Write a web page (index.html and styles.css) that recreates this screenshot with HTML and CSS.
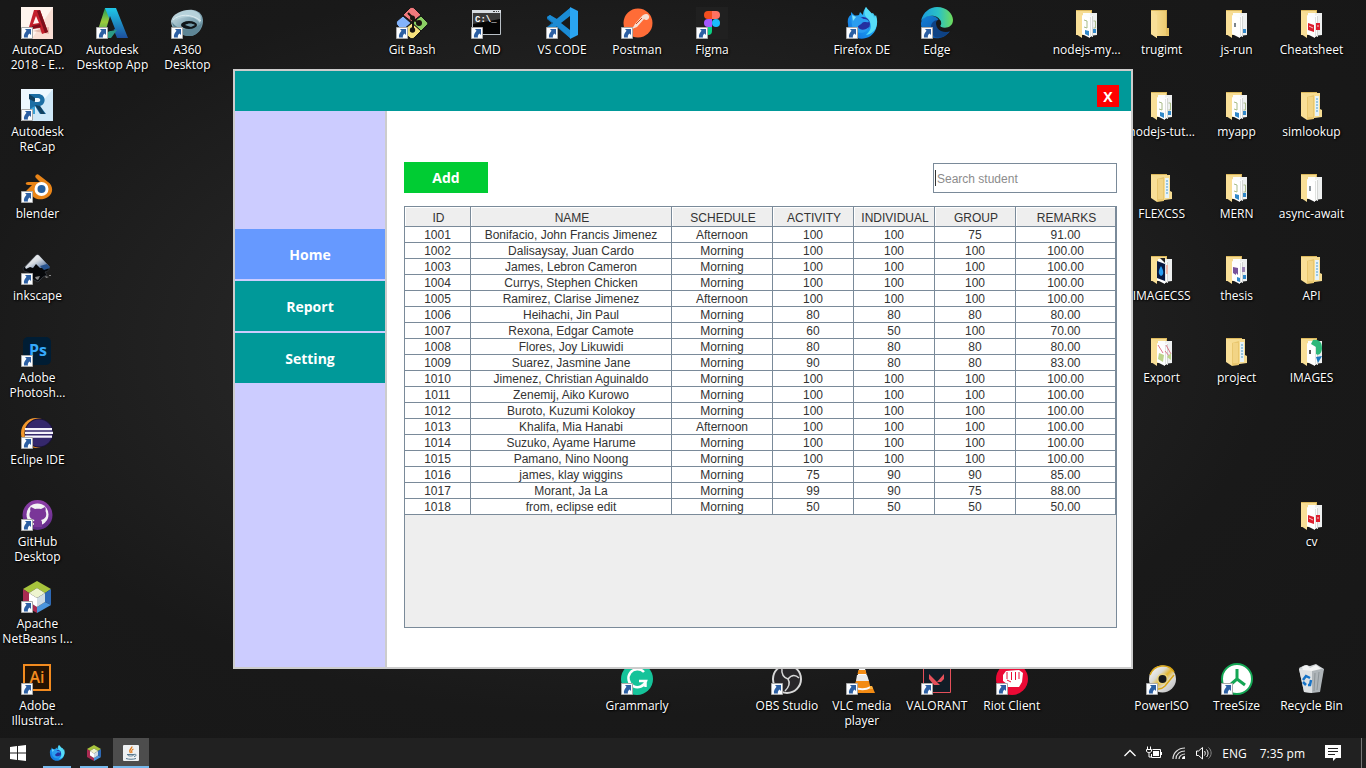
FILE: index.html
```html
<!DOCTYPE html>
<html lang="en">
<head>
<meta charset="utf-8">
<meta name="viewport" content="width=device-width, initial-scale=1">
<title>Desktop</title>
<link rel="stylesheet" href="styles.css">
</head>
<body>
<svg class="sprite" aria-hidden="true">
  <defs>
    <linearGradient id="gBlueSky" x1="0" y1="0" x2="0" y2="1"><stop offset="0" stop-color="#1fc8e8"/><stop offset="1" stop-color="#1d4f9f"/></linearGradient>
    <linearGradient id="gGreen" x1="0" y1="0" x2="0" y2="1"><stop offset="0" stop-color="#1f9a5a"/><stop offset=".5" stop-color="#9ccc3c"/><stop offset="1" stop-color="#2f9a66"/></linearGradient>
    <linearGradient id="gSteel" x1="0" y1="0" x2="1" y2="1"><stop offset="0" stop-color="#d9eaf0"/><stop offset=".5" stop-color="#86aab8"/><stop offset="1" stop-color="#5f8796"/></linearGradient>
    <linearGradient id="gInk" x1="0" y1="0" x2="1" y2="1"><stop offset="0" stop-color="#fff"/><stop offset=".45" stop-color="#d7dce2"/><stop offset="1" stop-color="#274f8c"/></linearGradient>
    <linearGradient id="gFolder" x1="0" y1="0" x2="1" y2="0"><stop offset="0" stop-color="#fbe3a0"/><stop offset="1" stop-color="#eac768"/></linearGradient>
    <linearGradient id="gFire" x1="0" y1="1" x2="1" y2="0"><stop offset="0" stop-color="#1268d8"/><stop offset=".5" stop-color="#1a9af0"/><stop offset="1" stop-color="#58e6fa"/></linearGradient>
    <linearGradient id="gEdge" x1="0" y1="0" x2="1" y2="0"><stop offset="0" stop-color="#1a9be0"/><stop offset=".55" stop-color="#2bc2c4"/><stop offset="1" stop-color="#6fdc5a"/></linearGradient>
    <linearGradient id="gEdgeLow" x1="0" y1="0" x2="1" y2="1"><stop offset="0" stop-color="#1380d8"/><stop offset="1" stop-color="#0d4a9a"/></linearGradient>
    <linearGradient id="gPurple" x1="0" y1="0" x2="0" y2="1"><stop offset="0" stop-color="#8f3fa9"/><stop offset="1" stop-color="#5d2a86"/></linearGradient>
    <linearGradient id="gDisc" x1="0" y1="0" x2="1" y2="1"><stop offset="0" stop-color="#fff"/><stop offset=".35" stop-color="#d9d9d4"/><stop offset=".5" stop-color="#e3b52c"/><stop offset=".65" stop-color="#ddd"/><stop offset="1" stop-color="#b5b5b5"/></linearGradient>
  </defs>

  <symbol id="arrow" viewBox="0 0 12 12">
    <path fill="#fbfdff" stroke="#a9a9a9" stroke-width="1" d="M.5.5h11v11H.5z"/>
    <path fill="#2c5fa3" d="M4 2h6v6L8.500 6.500C7 8 6.500 9 7 10.500H3C2.400 7.600 4 5.500 5.500 3.700z"/>
  </symbol>

  <symbol id="autocad" viewBox="0 0 32 32">
    <path fill="#f9ded4" d="M0 0h32v32H0z"/><path fill="#fff4ee" d="M0 0h32L12 30H0z"/>
    <path fill="#e3b8ac" d="M12 24l16-4v7z"/>
    <path fill="#c3202c" d="M13 3h6l8 22-6 2-2-6-8 1-2 5H6zM15 9l-3 8 6-1z" fill-rule="evenodd"/>
    <path fill="#7d0f1a" d="M19 3l8 22-3 1L16 4zM11 19l8-2 1 3-9 2z"/>
  </symbol>
  <symbol id="autodesk" viewBox="0 0 32 32">
    <path fill="url(#gGreen)" d="M9 1h6l2 7-8 21H0z"/><path fill="url(#gBlueSky)" d="M9 1h11l12 30H21z"/>
    <path fill="#2b9a86" d="M7 25l14-2-6 8H4z"/><path fill="#1a1a1a" d="M14 9l5 13-10 4z"/>
  </symbol>
  <symbol id="a360" viewBox="0 0 32 32">
    <path fill="url(#gSteel)" d="M0 14C2 6 13 2 22 3c7 1 10 6 10 11 0 8-6 15-13 15C8 29 0 22 0 14z"/>
    <path fill="#5f8696" d="M1 15c5 8 19 11 30 1-2 8-6 13-12 13C9 29 2 23 1 15z"/>
    <path fill="#b6d2db" d="M5 9c5-5 14-8 21-4 5 3 4 8 3 11-4-7-15-8-24-3z"/>
    <ellipse cx="18" cy="18" rx="8" ry="4" fill="#10161a"/><path fill="#7197a6" d="M14 18c3-2 7-2 10 0l-4 2c-2-1-4-1-6-2z"/>
    <path fill="none" stroke="#dcebf0" d="M2 13c6-6 18-7 28 1"/>
  </symbol>
  <symbol id="recap" viewBox="0 0 32 32">
    <path fill="#cfe8f8" d="M0 0h32v32H0z"/><path fill="#eef8ff" d="M0 0h32L8 28H0z"/>
    <path fill="#1c6ea4" fill-rule="evenodd" d="M8 5h9c8 0 9 10 2 12l6 8h-6l-5-8v8H9V12zM13 9v4h4c3 0 3-4 0-4z"/>
    <path fill="#12405f" d="M8 5l6 4v4L8 10zM14 16l5 1 5 8h-4z"/><path fill="#39a0d6" d="M9 20l5-3v8H9z"/>
  </symbol>
  <symbol id="blender" viewBox="0 0 32 32">
    <path fill="#e88418" d="M15 4c1-1 2-1 3 0l9 7c6 4 5 12 0 15-6 4-15 3-17-4l-8 6c-3 2-4-1-2-3L11 14H7c-3 0-3-3 0-3h12l-4-4c-1-1-1-2 0-3z"/>
    <circle cx="20.500" cy="18" r="7" fill="#fff"/><circle cx="20.500" cy="18" r="4" fill="#265f9e"/>
  </symbol>
  <symbol id="inkscape" viewBox="0 0 32 32">
    <path fill="#06080b" stroke="#30343a" d="M15 2L3 14c-2 2 0 5 3 5l6 3-3 3 8 4 5-5 4-2-2-3c4-1 5-3 3-5L18 2c-1-1-2-1-3 0z"/>
    <path fill="url(#gInk)" d="M15 2.500c1-1 2-1 3 0L29 14c-4 2-7 0-10 1l-4-4-3 4-3-1-4 2-1-2z"/>
    <path fill="#26528e" d="M19 13l7-2 3 4-6 2z"/><path fill="#8a8a8a" d="M14 24l5-1-2 4-2-1zM24 23l4 1-3 1zM28 22h2v1h-2z"/>
  </symbol>
  <symbol id="eclipse" viewBox="0 0 32 32">
    <circle cx="15" cy="16" r="15" fill="#f3982d"/><circle cx="18" cy="16" r="14.500" fill="#1a1436"/><circle cx="18" cy="16" r="13.500" fill="#35286c"/>
    <path fill="#f5f3fb" d="M4 11h27v2.200H4zM4 14.800h28V17H4zM4 18.500h27v2.200H4z"/>
  </symbol>
  <symbol id="github" viewBox="0 0 32 32">
    <circle cx="16.500" cy="16" r="15" fill="url(#gPurple)"/>
    <circle cx="16.500" cy="15.500" r="11" fill="#f2f2f4"/>
    <path fill="#7a3698" d="M10 8l4 2c2-.5 4-.5 6 0l4-2c1 1 .7 3 .5 4 2 5 0 8-4.500 9 1 1 1 2 1 3v4h-8v-4c-3 1-4-1-5-3 2 0 2 2 5 1l.5-1C9 20 7 17 9.500 12 9 11 9 9 10 8z"/>
  </symbol>
  <symbol id="netbeans" viewBox="0 0 32 32">
    <path fill="#a7c43c" d="M16 0l14 8-6 4-8-5-8 5-6-4z"/><path fill="#a92b52" d="M2 8l6 4v9l8 5v6L2 24z"/>
    <path fill="#2d69b5" d="M30 8v16l-6-3v-9z"/><path fill="#4b95dd" d="M24 21l6 3-14 8v-6z"/>
    <path fill="#eef4cf" d="M16 7l8 5-8 5-8-5z"/><path fill="#fff" d="M8 12l8 5v9l-8-5z"/><path fill="#cfdce4" d="M24 12v9l-8 5v-9z"/>
  </symbol>
  <symbol id="gitbash" viewBox="0 0 32 32">
    <g stroke="#151515" stroke-width="1">
      <path fill="#f0797c" d="M14 1c1-1 3-1 4 0l7 7-9 7-9-7z"/><path fill="#83b3fb" d="M7 9l8 7-9 8-5-6c-1-1-1-3 0-4z"/>
      <path fill="#8bcf63" d="M25 9l6 6c1 1 1 2 0 3l-6 6-9-8z"/><path fill="#f8e27c" d="M16 16l9 8-7 7c-1 1-3 1-4 0l-8-7z"/></g>
    <g fill="none" stroke="#1a1410" stroke-width="2"><path d="M12 6l5 5v12M17 12l6 4"/></g>
    <g fill="#1a1410"><circle cx="16.500" cy="11" r="2.500"/><circle cx="23" cy="16" r="3"/><circle cx="16.500" cy="23" r="2.700"/></g>
  </symbol>
  <symbol id="vscode" viewBox="0 0 32 32">
    <path fill="#0f72b8" d="M1 10l3-2 20 15v8L1 12zM24 1L1 20v2l3 2 20-15z"/>
    <path fill="#1b8bd4" d="M24 1L11 12l-7-4-3 2 6 6-6 6 3 2 7-5 13 12z"/>
    <path fill="#2aa5f2" d="M24 0l8 4v24l-8 4z"/><path fill="#191919" d="M24 9v14l-9-7z"/>
  </symbol>
  <symbol id="postman" viewBox="0 0 32 32">
    <circle cx="17" cy="16" r="14.500" fill="#ff6c37"/>
    <path fill="#f6ded3" d="M25 7a3 3 0 1 1-2 5l-7 8-5 2 3-5 7-8c1-1 2-2 4-2z"/><path stroke="#c74820" d="M15 17l6-6M9 25l3-3"/>
  </symbol>
  <symbol id="figma" viewBox="0 0 32 32">
    <rect width="32" height="32" fill="#202020"/>
    <path fill="#f24e1e" d="M16 4h-4a4 4 0 0 0 0 8h4z"/><path fill="#ff7262" d="M16 4h4a4 4 0 0 1 0 8h-4z"/>
    <path fill="#a259ff" d="M16 12h-4a4 4 0 0 0 0 8h4z"/><circle cx="20" cy="16" r="4" fill="#1abcfe"/><path fill="#0acf83" d="M12 20h4v4a4 4 0 1 1-4-4z"/>
  </symbol>
  <symbol id="firefox" viewBox="0 0 32 32">
    <path fill="url(#gFire)" d="M2 17c-1-5 1-8 3-9V5l4 4 4-1 1-3 3 3c0-3 1-5 3-8 1 3 2 4 4 7l3-1c7 9 4 22-7 25C11 34 2 27 2 17z"/>
    <path fill="#56dcf8" d="M20 0c3 4 7 6 8 11l2-3c4 12-3 19-10 20 8-7 5-13 1-17-3-3-3-6-1-11z"/>
    <circle cx="17" cy="17" r="7" fill="#2430a0"/><path fill="#2a9df0" d="M6 9c4-1 7 0 10 2 2 2 6 0 7 4-3 1-5-1-7 1-1 2-4 2-4 4 2 4 8 3 11 0-2 8-16 8-17-2-1-4 0-6 0-9z"/>
    <path fill="#7ee2f9" d="M6 8l4 2-3 4z"/>
  </symbol>
  <symbol id="edge" viewBox="0 0 32 32">
    <path fill="url(#gEdgeLow)" d="M0 16C1 10 7 8 12 9c5 1 7 5 6 9-3 4 1 9 11 6-5 8-17 10-24 3C1 24 0 20 0 16z"/>
    <path fill="#0e4284" d="M10 20c0-4 3-7 7-7-4 6 1 14 12 10-3 6-9 9-15 7-4-3-4-6-4-10z"/>
    <path fill="url(#gEdge)" d="M0 14C2 5 9 0 16 0c10 0 16 7 16 13 0 7-7 9-12 7-2-1 1-2 0-5C17 7 6 7 0 14z"/>
    <path fill="#181818" d="M15 16c0-3 4-5 5-1 0 2-3 3 0 5 4 3 9 2 12 1l-2 3c-8 3-15-1-15-8z"/>
  </symbol>

  <symbol id="folder" viewBox="0 0 32 32">
    <path fill="#d9b65d" d="M5 3h16v22H5z"/><path fill="url(#gFolder)" d="M5 4h15v17l3 1v7H11V31l-6-4z"/><path fill="#f9df97" d="M5 4l6 4v23l-6-4z"/><path fill="#e4bf62" d="M20 21h3v7h-3z"/>
  </symbol>
  <symbol id="folder-base" viewBox="0 0 32 32">
    <path fill="#dcb85c" d="M5 3h16v4H5z"/><path fill="#f6dc92" d="M5 4h15v24H5z"/>
    <path fill="#eef0f0" d="M18 6h8v22l-8 1z"/><path fill="#fcfdfd" d="M12 6h7v3l3-1v22l-10-4z"/><path fill="#d4d6d4" d="M21 9h1v20h-1z"/>
    <path fill="#f9df97" d="M5 4l6 4v23l-6-4z"/><path fill="#fff" d="M11 8l8 4v19l-8-4z"/><path fill="#e0e2e0" d="M19 10h1v20h-1z"/>
  </symbol>
  <symbol id="folder-code" viewBox="0 0 32 32">
    <use href="#folder-base"/><path fill="none" stroke="#a9bb88" d="M13 13l3 1v7l-3-1M22.500 14h2v7h-2"/><path fill="#3188c9" d="M14 23l4 1v5l-4-2zM22 22h3v4h-3z"/>
  </symbol>
  <symbol id="folder-file" viewBox="0 0 32 32">
    <use href="#folder-base"/><path stroke="#7d858c" stroke-width="2" d="M14 16v4"/><path fill="#3188c9" d="M22 22h3v4h-3z"/>
  </symbol>
  <symbol id="folder-plain" viewBox="0 0 32 32">
    <use href="#folder-base"/><path stroke="#8d959c" stroke-width="2" d="M14 15v5"/>
  </symbol>
  <symbol id="folder-pdf" viewBox="0 0 32 32">
    <use href="#folder-base"/><path fill="#dc1e2d" d="M12 16l6 2v7l-6-2zM20 16h4v7h-4z"/><path stroke="#f7c4c8" d="M13 19l4 2M21 19h2"/>
  </symbol>
  <symbol id="folder-nested" viewBox="0 0 32 32">
    <path fill="#dcb85c" d="M5 3h16v4H5z"/><path fill="#f6dc92" d="M5 4h19v16l2 1v7l-15 2z"/><path fill="#e6f2f8" d="M19 7h4v20h-4z"/>
    <path stroke="#4b9cca" stroke-dasharray="2 1" d="M21 9v15"/><path fill="#e9c76f" d="M11 8l7-2v24l-7 1z"/><path fill="#f9df97" d="M5 4l6 4v23l-6-4z"/><path fill="#f2d485" d="M12 8h5v20h-5z"/>
  </symbol>
  <symbol id="folder-image" viewBox="0 0 32 32">
    <use href="#folder-base"/><path fill="#081840" d="M11 8l8 3v17l-8-3z"/><path fill="#279cf1" d="M15 13c3 5 3 9 0 10-3-2-3-5 0-10z"/><path fill="#222" d="M14 5h5v5z"/><path fill="#f0b7aa" d="M20 12h2v9h-2z"/>
  </symbol>
  <symbol id="folder-php" viewBox="0 0 32 32">
    <use href="#folder-base"/><path fill="#78539b" d="M12 14l5 1v7l-2-2v2l-3-2z"/><path fill="#9b82b5" d="M21 14h3v5h-3z"/><path fill="#3188c9" d="M16 24l3 1v4l-3-1zM22 22h3v4h-3z"/>
  </symbol>
  <symbol id="folder-export" viewBox="0 0 32 32">
    <use href="#folder-base"/><path stroke="#de788b" d="M12 10l5 8M20 10l5 9M19 16l5 6"/><path fill="#bdd48b" d="M13 18l5 2-1 7-5-3zM21 22l4-4v7z"/>
  </symbol>
  <symbol id="folder-edge" viewBox="0 0 32 32">
    <use href="#folder-base"/><path fill="#2eb879" d="M17 5c7-1 9 3 9 8s-3 8-6 6V12l-5-3z"/><path fill="#1a77bd" d="M20 22l6-1-4 7z"/><path stroke="#555" stroke-width="2" d="M14 15v4"/>
  </symbol>

  <symbol id="grammarly" viewBox="0 0 32 32">
    <circle cx="16" cy="16" r="16" fill="#15c39a"/><path fill="none" stroke="#fff" stroke-width="2.500" d="M23 9a9 9 0 1 0 2 9h-7M24.500 18v6"/>
  </symbol>
  <symbol id="obs" viewBox="0 0 32 32">
    <circle cx="16" cy="16" r="14" fill="#29272a" stroke="#d8d8d8" stroke-width="2"/>
    <g fill="none" stroke="#d8d8d8" stroke-width="1.500"><path d="M11 6c-1 5 2 9 6 10 4-5 8-4 11-1M17 16c3 5 0 9-3 12"/></g>
  </symbol>
  <symbol id="vlc" viewBox="0 0 32 32">
    <path fill="#f38b13" d="M7 23h19l3 7H4z"/><path fill="#ffb33f" d="M7 23h19l1 3H6z"/><path fill="#fafafa" d="M14 2h4l6 23c-3 3-12 3-15 0z"/>
    <path fill="#f38b13" d="M12.500 7h7l1 4h-9z"/><path fill="#f38b13" d="M10 18h13l1 5c-4 3-11 3-16 0z"/><path fill="#e9e9e9" d="M11 12h10l2 6H10z"/>
  </symbol>
  <symbol id="valorant" viewBox="0 0 32 32">
    <path fill="#111c26" stroke="#e4505a" d="M2.500 2.500h27v27h-27z"/><path fill="#e4505a" d="M8 11l11 11h-6l-5-6zM23 11v5l-3 3h-4z"/>
  </symbol>
  <symbol id="riot" viewBox="0 0 32 32">
    <circle cx="16" cy="16" r="16" fill="#eb0a35"/>
    <path fill="#fff" d="M7 12l3-4 13-1 4 3-1 9-3 5H12l-1-3-4-3z"/><path fill="none" stroke="#eb0a35" d="M11 9v7M15.500 9v8M19.500 9v8M23 9v7M11 17l4 2"/>
  </symbol>
  <symbol id="poweriso" viewBox="0 0 32 32">
    <circle cx="16.500" cy="16" r="13.500" fill="url(#gDisc)"/><path fill="none" stroke="#d9a514" stroke-width="1.500" d="M4 12C8 1 23 0 28 9M5 23c5 5 11 3 14 0l9-11"/>
    <circle cx="16.500" cy="16" r="5.500" fill="#ead37a"/><circle cx="16.500" cy="16" r="4" fill="#16181b"/>
  </symbol>
  <symbol id="treesize" viewBox="0 0 32 32">
    <circle cx="16" cy="16" r="15" fill="#fff" stroke="#14a654" stroke-width="2"/><path fill="none" stroke="#14a654" stroke-width="3" d="M16 6v10l-8 7M16 16l8 6"/>
  </symbol>
  <symbol id="bin" viewBox="0 0 32 32">
    <path fill="#cfd4d7" d="M3 5l6-3 5 1 6-2 3 2 5 3-2 4H5z"/><path fill="#aeb4b8" d="M3 6h25l-4 23-8 1-8-1z"/><path fill="#dee1e3" d="M3 6h13v24l-8-1z"/><path fill="#f3f4f4" d="M6 4l5-2 3 3 6-3 5 4-9 2-9-1z"/><path stroke="#8d9498" d="M19 10l-1 18M23 9l-2 18"/>
    <path fill="none" stroke="#1673c7" stroke-width="2.500" d="M7 17l3-4 4 2M15 17l-1 5h-2M10 22l-3-3"/>
  </symbol>
  <symbol id="java" viewBox="0 0 16 16">
    <rect width="16" height="16" rx="1" fill="#eef1f3"/><path fill="none" stroke="#e07a1c" stroke-width="1.300" d="M9 1.500C9 4 5 4.500 7.500 8M10.500 4C8 5 8.500 6 9 8"/>
    <path fill="none" stroke="#55788f" d="M4 9.500h7c-.5 2-6.500 2-6.500 0M11 9.500c3-1 2.500 2 0 2M3 13.500c3 1 7 1 10 0"/>
  </symbol>
</svg>

<main class="desktop">
  <nav class="shortcuts" aria-label="Desktop shortcuts">
    <a class="item c1 r1" href="#"><span class="icon"><svg class="art"><use href="#autocad"/></svg><svg class="badge"><use href="#arrow"/></svg></span><span class="label">AutoCAD<br>2018 - E...</span></a>
    <a class="item c2 r1" href="#"><span class="icon"><svg class="art"><use href="#autodesk"/></svg><svg class="badge"><use href="#arrow"/></svg></span><span class="label">Autodesk<br>Desktop App</span></a>
    <a class="item c3 r1" href="#"><span class="icon"><svg class="art"><use href="#a360"/></svg><svg class="badge"><use href="#arrow"/></svg></span><span class="label">A360<br>Desktop</span></a>
    <a class="item c6 r1" href="#"><span class="icon"><svg class="art"><use href="#gitbash"/></svg><svg class="badge"><use href="#arrow"/></svg></span><span class="label">Git Bash</span></a>
    <a class="item c7 r1" href="#"><span class="icon"><svg class="art" viewBox="0 0 32 32"><path fill="#050505" stroke="#b9c0c6" d="M1.500 3.500h28v24h-28z"/><path fill="#d8dde2" d="M1 3h29v3H1z"/><path fill="#3a3a3a" d="M2 6h27v6L2 17z"/><path stroke="#444" d="M22 4.500h2M25 4.500h1M27 4.500h1"/><text class="mono-text" x="4" y="15" font-size="9" fill="#fff">C:\_</text></svg><svg class="badge"><use href="#arrow"/></svg></span><span class="label">CMD</span></a>
    <a class="item c8 r1" href="#"><span class="icon"><svg class="art"><use href="#vscode"/></svg><svg class="badge"><use href="#arrow"/></svg></span><span class="label">VS CODE</span></a>
    <a class="item c9 r1" href="#"><span class="icon"><svg class="art"><use href="#postman"/></svg><svg class="badge"><use href="#arrow"/></svg></span><span class="label">Postman</span></a>
    <a class="item c10 r1" href="#"><span class="icon"><svg class="art"><use href="#figma"/></svg><svg class="badge"><use href="#arrow"/></svg></span><span class="label">Figma</span></a>
    <a class="item c12 r1" href="#"><span class="icon"><svg class="art"><use href="#firefox"/></svg><svg class="badge"><use href="#arrow"/></svg></span><span class="label">Firefox DE</span></a>
    <a class="item c13 r1" href="#"><span class="icon"><svg class="art"><use href="#edge"/></svg><svg class="badge"><use href="#arrow"/></svg></span><span class="label">Edge</span></a>
    <a class="item c15 r1" href="#"><span class="icon"><svg class="art"><use href="#folder-code"/></svg></span><span class="label">nodejs-my...</span></a>
    <a class="item c16 r1" href="#"><span class="icon"><svg class="art"><use href="#folder"/></svg></span><span class="label">trugimt</span></a>
    <a class="item c17 r1" href="#"><span class="icon"><svg class="art"><use href="#folder-file"/></svg></span><span class="label">js-run</span></a>
    <a class="item c18 r1" href="#"><span class="icon"><svg class="art"><use href="#folder-pdf"/></svg></span><span class="label">Cheatsheet</span></a>

    <a class="item c1 r2" href="#"><span class="icon"><svg class="art"><use href="#recap"/></svg><svg class="badge"><use href="#arrow"/></svg></span><span class="label">Autodesk<br>ReCap</span></a>
    <a class="item c16 r2" href="#"><span class="icon"><svg class="art"><use href="#folder-code"/></svg></span><span class="label">nodejs-tut...</span></a>
    <a class="item c17 r2" href="#"><span class="icon"><svg class="art"><use href="#folder-code"/></svg></span><span class="label">myapp</span></a>
    <a class="item c18 r2" href="#"><span class="icon"><svg class="art"><use href="#folder-nested"/></svg></span><span class="label">simlookup</span></a>

    <a class="item c1 r3" href="#"><span class="icon"><svg class="art"><use href="#blender"/></svg><svg class="badge"><use href="#arrow"/></svg></span><span class="label">blender</span></a>
    <a class="item c16 r3" href="#"><span class="icon"><svg class="art"><use href="#folder-nested"/></svg></span><span class="label">FLEXCSS</span></a>
    <a class="item c17 r3" href="#"><span class="icon"><svg class="art"><use href="#folder-code"/></svg></span><span class="label">MERN</span></a>
    <a class="item c18 r3" href="#"><span class="icon"><svg class="art"><use href="#folder-plain"/></svg></span><span class="label">async-await</span></a>

    <a class="item c1 r4" href="#"><span class="icon"><svg class="art"><use href="#inkscape"/></svg><svg class="badge"><use href="#arrow"/></svg></span><span class="label">inkscape</span></a>
    <a class="item c16 r4" href="#"><span class="icon"><svg class="art"><use href="#folder-image"/></svg></span><span class="label">IMAGECSS</span></a>
    <a class="item c17 r4" href="#"><span class="icon"><svg class="art"><use href="#folder-php"/></svg></span><span class="label">thesis</span></a>
    <a class="item c18 r4" href="#"><span class="icon"><svg class="art"><use href="#folder-nested"/></svg></span><span class="label">API</span></a>

    <a class="item c1 r5" href="#"><span class="icon"><svg class="art" viewBox="0 0 32 32"><rect x="2" y="2" width="28" height="28" rx="5" fill="#001d34"/><text class="logo-text" x="17" y="21" font-size="16" text-anchor="middle" fill="#35a9fb">Ps</text></svg><svg class="badge"><use href="#arrow"/></svg></span><span class="label">Adobe<br>Photosh...</span></a>
    <a class="item c16 r5" href="#"><span class="icon"><svg class="art"><use href="#folder-export"/></svg></span><span class="label">Export</span></a>
    <a class="item c17 r5" href="#"><span class="icon"><svg class="art"><use href="#folder-nested"/></svg></span><span class="label">project</span></a>
    <a class="item c18 r5" href="#"><span class="icon"><svg class="art"><use href="#folder-edge"/></svg></span><span class="label">IMAGES</span></a>

    <a class="item c1 r6" href="#"><span class="icon"><svg class="art"><use href="#eclipse"/></svg><svg class="badge"><use href="#arrow"/></svg></span><span class="label">Eclipe IDE</span></a>

    <a class="item c1 r7" href="#"><span class="icon"><svg class="art"><use href="#github"/></svg><svg class="badge"><use href="#arrow"/></svg></span><span class="label">GitHub<br>Desktop</span></a>
    <a class="item c18 r7" href="#"><span class="icon"><svg class="art"><use href="#folder-pdf"/></svg></span><span class="label">cv</span></a>

    <a class="item c1 r8" href="#"><span class="icon"><svg class="art"><use href="#netbeans"/></svg><svg class="badge"><use href="#arrow"/></svg></span><span class="label">Apache<br>NetBeans I...</span></a>

    <a class="item c1 r9" href="#"><span class="icon"><svg class="art" viewBox="0 0 32 32"><path fill="#251302" stroke="#f38b1f" stroke-width="2" d="M3 2h26v25H3z"/><text class="logo-text-light" x="16" y="20" font-size="16" text-anchor="middle" fill="#f38b1f">Ai</text></svg><svg class="badge"><use href="#arrow"/></svg></span><span class="label">Adobe<br>Illustrat...</span></a>
    <a class="item c9 r9" href="#"><span class="icon"><svg class="art"><use href="#grammarly"/></svg><svg class="badge"><use href="#arrow"/></svg></span><span class="label">Grammarly</span></a>
    <a class="item c11 r9" href="#"><span class="icon"><svg class="art"><use href="#obs"/></svg><svg class="badge"><use href="#arrow"/></svg></span><span class="label">OBS Studio</span></a>
    <a class="item c12 r9" href="#"><span class="icon"><svg class="art"><use href="#vlc"/></svg><svg class="badge"><use href="#arrow"/></svg></span><span class="label">VLC media<br>player</span></a>
    <a class="item c13 r9" href="#"><span class="icon"><svg class="art"><use href="#valorant"/></svg><svg class="badge"><use href="#arrow"/></svg></span><span class="label">VALORANT</span></a>
    <a class="item c14 r9" href="#"><span class="icon"><svg class="art"><use href="#riot"/></svg><svg class="badge"><use href="#arrow"/></svg></span><span class="label">Riot Client</span></a>
    <a class="item c16 r9" href="#"><span class="icon"><svg class="art"><use href="#poweriso"/></svg><svg class="badge"><use href="#arrow"/></svg></span><span class="label">PowerISO</span></a>
    <a class="item c17 r9" href="#"><span class="icon"><svg class="art"><use href="#treesize"/></svg><svg class="badge"><use href="#arrow"/></svg></span><span class="label">TreeSize</span></a>
    <a class="item c18 r9" href="#"><span class="icon"><svg class="art"><use href="#bin"/></svg></span><span class="label">Recycle Bin</span></a>
  </nav>

  <section class="window" aria-label="Student records">
    <header class="titlebar"><button class="close" type="button" aria-label="Close">X</button></header>
    <div class="body">
      <nav class="sidebar" aria-label="Sections">
        <button class="tab active" type="button">Home</button>
        <button class="tab" type="button">Report</button>
        <button class="tab" type="button">Setting</button>
      </nav>
      <div class="content">
        <div class="toolbar">
          <button class="add" type="button">Add</button>
          <div class="search-box"><input class="search" type="text" placeholder="Search student" aria-label="Search student"></div>
        </div>
        <div class="table-pane">
          <table class="grades">
            <colgroup><col class="w-id"><col class="w-name"><col class="w-wide"><col class="w-score"><col class="w-score"><col class="w-score"><col></colgroup>
            <thead><tr><th scope="col">ID</th><th scope="col">NAME</th><th scope="col">SCHEDULE</th><th scope="col">ACTIVITY</th><th scope="col">INDIVIDUAL</th><th scope="col">GROUP</th><th scope="col">REMARKS</th></tr></thead>
            <tbody>
              <tr><td>1001</td><td>Bonifacio, John Francis Jimenez</td><td>Afternoon</td><td>100</td><td>100</td><td>75</td><td>91.00</td></tr>
              <tr><td>1002</td><td>Dalisaysay, Juan Cardo</td><td>Morning</td><td>100</td><td>100</td><td>100</td><td>100.00</td></tr>
              <tr><td>1003</td><td>James, Lebron Cameron</td><td>Morning</td><td>100</td><td>100</td><td>100</td><td>100.00</td></tr>
              <tr><td>1004</td><td>Currys, Stephen Chicken</td><td>Morning</td><td>100</td><td>100</td><td>100</td><td>100.00</td></tr>
              <tr><td>1005</td><td>Ramirez, Clarise Jimenez</td><td>Afternoon</td><td>100</td><td>100</td><td>100</td><td>100.00</td></tr>
              <tr><td>1006</td><td>Heihachi, Jin Paul</td><td>Morning</td><td>80</td><td>80</td><td>80</td><td>80.00</td></tr>
              <tr><td>1007</td><td>Rexona, Edgar Camote</td><td>Morning</td><td>60</td><td>50</td><td>100</td><td>70.00</td></tr>
              <tr><td>1008</td><td>Flores, Joy Likuwidi</td><td>Morning</td><td>80</td><td>80</td><td>80</td><td>80.00</td></tr>
              <tr><td>1009</td><td>Suarez, Jasmine Jane</td><td>Morning</td><td>90</td><td>80</td><td>80</td><td>83.00</td></tr>
              <tr><td>1010</td><td>Jimenez, Christian Aguinaldo</td><td>Morning</td><td>100</td><td>100</td><td>100</td><td>100.00</td></tr>
              <tr><td>1011</td><td>Zenemij, Aiko Kurowo</td><td>Morning</td><td>100</td><td>100</td><td>100</td><td>100.00</td></tr>
              <tr><td>1012</td><td>Buroto, Kuzumi Kolokoy</td><td>Morning</td><td>100</td><td>100</td><td>100</td><td>100.00</td></tr>
              <tr><td>1013</td><td>Khalifa, Mia Hanabi</td><td>Afternoon</td><td>100</td><td>100</td><td>100</td><td>100.00</td></tr>
              <tr><td>1014</td><td>Suzuko, Ayame Harume</td><td>Morning</td><td>100</td><td>100</td><td>100</td><td>100.00</td></tr>
              <tr><td>1015</td><td>Pamano, Nino Noong</td><td>Morning</td><td>100</td><td>100</td><td>100</td><td>100.00</td></tr>
              <tr><td>1016</td><td>james, klay wiggins</td><td>Morning</td><td>75</td><td>90</td><td>90</td><td>85.00</td></tr>
              <tr><td>1017</td><td>Morant, Ja La</td><td>Morning</td><td>99</td><td>90</td><td>75</td><td>88.00</td></tr>
              <tr><td>1018</td><td>from, eclipse edit</td><td>Morning</td><td>50</td><td>50</td><td>50</td><td>50.00</td></tr>
            </tbody>
          </table>
        </div>
      </div>
    </div>
  </section>
</main>

<footer class="taskbar">
  <div class="apps">
    <button class="start" type="button" aria-label="Start"><svg width="16" height="16" viewBox="0 0 16 16"><path fill="#fff" d="M0 2l7-1v6.500H0zM8 1l8-1v7.500H8zM0 8.500h7V15l-7-1zM8 8.500h8V16l-8-1z"/></svg></button>
    <button class="app" type="button" aria-label="Firefox"><svg width="16" height="16"><use href="#firefox"/></svg></button>
    <button class="app" type="button" aria-label="NetBeans"><svg width="16" height="16"><use href="#netbeans"/></svg></button>
    <button class="app current" type="button" aria-label="Java"><svg width="16" height="16"><use href="#java"/></svg></button>
  </div>
  <div class="tray">
    <button class="tray-button" type="button" aria-label="Show hidden icons"><svg width="12" height="16" viewBox="0 0 12 16"><path fill="none" stroke="#fff" stroke-width="1.300" d="M.5 11L6 5.500l5.500 5.500"/></svg></button>
    <button class="tray-button" type="button" aria-label="Battery"><svg width="16" height="16" viewBox="0 0 16 16"><path fill="none" stroke="#fff" d="M6.500 4.500h8v8h-9V9M1.500 1.500V4M4.500 1.500V4M.5 4.500h5V6c0 2-5 2-5 0zM3 8v4h2M15.500 7v3"/><path fill="#fff" d="M7 6h6v5H7z"/></svg></button>
    <button class="tray-button" type="button" aria-label="Network"><svg width="14" height="16" viewBox="0 0 14 16"><g fill="none" stroke="#ddd" stroke-width="1.200"><path d="M1 14C1 8 6 3 13 3M4 14c0-5 4-8 9-8M7 14c0-3 3-5 6-5"/></g><path fill="#fff" d="M10 14c0-2 1-3 3-3v3z"/></svg></button>
    <button class="tray-button" type="button" aria-label="Volume"><svg width="16" height="16" viewBox="0 0 16 16"><g fill="none" stroke="#fff"><path d="M.5 6v4.500h2l4 3.500V2.500L2.500 6zM8.500 6c1 1 1 3.500 0 4.500M10.500 4.500c2 2 2 5.500 0 7.500"/><path stroke="#888" d="M12.500 2.500c3.500 3 3.500 8 0 11"/></g></svg></button>
    <button class="tray-button" type="button">ENG</button>
    <button class="tray-button clock" type="button">7:35 pm</button>
    <button class="tray-button notices" type="button" aria-label="Notifications"><svg width="16" height="16" viewBox="0 0 16 16"><path fill="#fff" d="M0 0h16v13h-5l-3 3v-3H0z"/><path stroke="#222" d="M3 3.500h10M3 6.500h10M3 9.500h7"/></svg></button>
  </div>
</footer>
</body>
</html>
```
FILE: styles.css
```css
* { box-sizing: border-box; }

body {
  margin: 0;
  min-height: 100vh;
  display: flex;
  flex-direction: column;
  background: radial-gradient(ellipse at 45% 45%, #2b2b2b 0%, #242424 35%, #191919 62%, #171717 100%);
  color: #fff;
  font-family: "Open Sans", "Noto Sans", sans-serif;
  font-size: 12px;
}

button, input { font: inherit; border: 0; margin: 0; padding: 0; border-radius: 0; }
.sprite { position: absolute; width: 0; height: 0; }
.logo-text { font-family: "Open Sans", sans-serif; font-weight: 700; }
.logo-text-light { font-family: "Open Sans", sans-serif; font-weight: 600; }
.mono-text { font-family: "Liberation Mono", monospace; font-weight: 700; }

/* Desktop */
.desktop { flex: 1; display: grid; }
.shortcuts, .window { grid-area: 1 / 1; }
.shortcuts {
  display: grid;
  grid-template-columns: repeat(18, minmax(0, 1fr));
  grid-template-rows: repeat(9, minmax(82px, 1fr));
  padding-right: 17px;
}
.item {
  display: flex;
  flex-direction: column;
  align-items: center;
  gap: 3px;
  padding-top: 7px;
  color: #fff;
  text-decoration: none;
}
.icon { position: relative; width: 32px; height: 32px; }
.art { display: block; width: 32px; height: 32px; }
.badge { position: absolute; left: 0; bottom: 0; width: 12px; height: 12px; }
.label {
  line-height: 15px;
  text-align: center;
  white-space: nowrap;
  text-shadow: 1px 1px 2px #000, 0 0 2px #000;
}
.c1 { grid-column: 1; } .c2 { grid-column: 2; } .c3 { grid-column: 3; }
.c6 { grid-column: 6; } .c7 { grid-column: 7; } .c8 { grid-column: 8; }
.c9 { grid-column: 9; } .c10 { grid-column: 10; } .c11 { grid-column: 11; }
.c12 { grid-column: 12; } .c13 { grid-column: 13; } .c14 { grid-column: 14; }
.c15 { grid-column: 15; } .c16 { grid-column: 16; } .c17 { grid-column: 17; }
.c18 { grid-column: 18; }
.r1 { grid-row: 1; } .r2 { grid-row: 2; } .r3 { grid-row: 3; }
.r4 { grid-row: 4; } .r5 { grid-row: 5; } .r6 { grid-row: 6; }
.r7 { grid-row: 7; } .r8 { grid-row: 8; } .r9 { grid-row: 9; }

/* Application window */
.window {
  place-self: center;
  z-index: 1;
  width: 100%;
  max-width: 900px;
  min-height: 600px;
  display: flex;
  flex-direction: column;
  border: 2px solid #ccc;
  background: #fff;
}
.titlebar {
  display: flex;
  justify-content: flex-end;
  padding: 14px 12px 4px;
  background: #099;
}
.close { width: 22px; height: 22px; background: #f00; color: #fff; font-size: 14px; font-weight: 700; }
.body { flex: 1; display: flex; }
.sidebar {
  flex: 0 0 152px;
  display: flex;
  flex-direction: column;
  gap: 2px;
  padding-top: 118px;
  border-right: 2px solid #ccc;
  background: #ccf;
}
.tab { height: 50px; background: #099; color: #fff; font-size: 14px; font-weight: 700; }
.active { background: #69f; }
.content {
  flex: 1;
  min-width: 0;
  display: flex;
  flex-direction: column;
  gap: 13px;
  padding: 51px 14px 39px 17px;
}
.toolbar { display: flex; justify-content: space-between; align-items: flex-end; }
.add { width: 84px; height: 31px; background: #0c3; color: #fff; font-size: 14px; font-weight: 700; }
.search-box {
  display: flex;
  align-items: center;
  width: 184px;
  height: 30px;
  padding-left: 1px;
  border: 1px solid #7a8a99;
  background: #fff;
}
.search {
  width: 100%;
  height: 16px;
  padding-top: 1px;
  padding-left: 1px;
  border-left: 1px solid #333;
  outline: 0;
  background: #fff;
  color: #333;
  font: 12px "Liberation Sans", Arial, sans-serif;
}
.search::placeholder { color: #8c8c8c; opacity: 1; }

.table-pane { flex: 1; border: 1px solid #7a8a99; background: #eee; }
.grades {
  width: 100%;
  table-layout: fixed;
  border-collapse: separate;
  border-spacing: 0;
  background: #fff;
  color: #333;
  font: 12px/14px "Liberation Sans", Arial, sans-serif;
  text-align: center;
}
.w-id { width: 66px; }
.w-name { width: 201px; }
.w-wide { width: 101px; }
.w-score { width: 81px; }
.grades th, .grades td {
  padding: 1px 0 0;
  border-right: 1px solid #7a8a99;
  border-bottom: 1px solid #7a8a99;
  white-space: nowrap;
}
.grades th {
  height: 20px;
  padding: 3px 0 0 2px;
  background: #eee;
  box-shadow: inset 1px 1px #fff;
  font-weight: 400;
}
.grades td { height: 16px; }

/* Taskbar */
.taskbar {
  display: flex;
  justify-content: space-between;
  height: 30px;
  background: #212121;
}
.apps, .tray { display: flex; align-items: stretch; }
.start, .app, .tray-button {
  display: flex;
  align-items: center;
  justify-content: center;
  background: none;
  color: #fff;
}
.start { width: 36px; margin-right: 7px; }
.app { width: 28px; margin-right: 9px; padding-top: 2px; border-bottom: 2px solid #76b9ed; }
.current { width: 36px; margin: 0; margin-left: -4px; background: #4d4d4d; }
.tray { gap: 10px; padding-right: 4px; }
.tray-button { flex: none; }
.clock { padding: 0 3px; }
.notices { padding: 0 20px 0 7px; border-right: 1px solid #777; }
```
